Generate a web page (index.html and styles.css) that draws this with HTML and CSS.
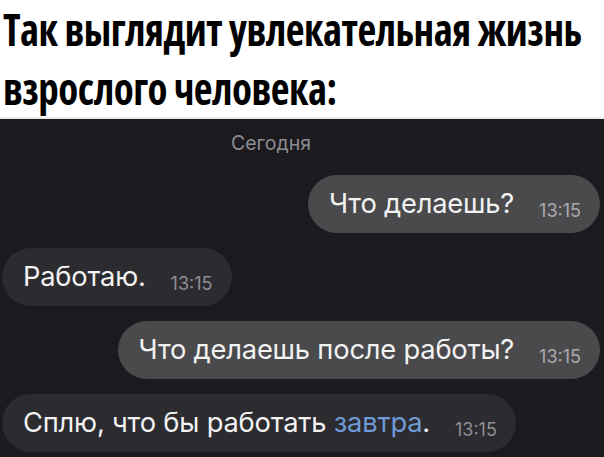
FILE: index.html
```html
<!DOCTYPE html>
<html lang="ru">
<head>
<meta charset="utf-8">
<link rel="stylesheet" href="styles.css">
</head>
<body>
<div class="page">
  <header class="caption">
    <h1 class="caption-title">Так выглядит увлекательная жизнь<br>взрослого человека:</h1>
  </header>
  <section class="chat">
    <div class="date">Сегодня</div>
    <div class="row row-out">
      <div class="bubble bubble-out"><span class="msg">Что делаешь?</span><span class="time">13:15</span></div>
    </div>
    <div class="row row-in">
      <div class="bubble bubble-in"><span class="msg">Работаю.</span><span class="time">13:15</span></div>
    </div>
    <div class="row row-out">
      <div class="bubble bubble-out"><span class="msg">Что делаешь после работы?</span><span class="time">13:15</span></div>
    </div>
    <div class="row row-in">
      <div class="bubble bubble-in"><span class="msg">Сплю, что бы работать <span class="link">завтра</span>.</span><span class="time">13:15</span></div>
    </div>
  </section>
</div>
</body>
</html>
```
FILE: styles.css
```css
html, body {
  margin: 0;
  padding: 0;
}
body {
  width: 604px;
  height: 457px;
  overflow: hidden;
  background: #1b1a1e;
}
.page {
  display: flex;
  flex-direction: column;
  width: 604px;
  height: 457px;
}
.caption {
  background: #ffffff;
  height: 117px;
  border-bottom: 2px solid #ececec;
  padding: 0 0 0 3px;
  box-sizing: content-box;
  white-space: nowrap;
}
.caption-title {
  margin: 0;
  padding-top: 0;
  font-family: "Open Sans", "DejaVu Sans Condensed", sans-serif;
  font-stretch: 75%;
  font-weight: 700;
  font-size: 41px;
  line-height: 54px;
  color: #000;
  letter-spacing: -0.5px;
  transform-origin: 0 0;
  transform: scaleY(1.08);
}
.chat {
  flex: 1;
  background: #1b1a1e;
  display: flex;
  flex-direction: column;
  gap: 15px;
  padding: 0 4px 0 2px;
}
.date {
  font-family: Inter, "Liberation Sans", sans-serif;
  font-size: 19.5px;
  color: #8d8c92;
  text-align: center;
  line-height: 24px;
  padding: 12px 60px 5px 0;
}
.row {
  display: flex;
}
.row-out {
  justify-content: flex-end;
}
.row-in {
  justify-content: flex-start;
}
.bubble {
  height: 58px;
  box-sizing: border-box;
  border-radius: 29px;
  padding: 0 19px 0 21px;
  font-family: Inter, "Liberation Sans", sans-serif;
  white-space: nowrap;
  line-height: 57px;
}
.bubble-out {
  background: #4a4a4d;
}
.bubble-in {
  background: #2c2b2f;
}
.msg {
  font-size: 27.3px;
  color: #f2f2f2;
  letter-spacing: -0.2px;
}
.link {
  color: #6f9ad6;
}
.time {
  display: inline-block;
  margin-left: 25px;
  font-size: 18px;
  vertical-align: -4px;
  line-height: 1;
}
.bubble-out .time {
  color: #a9a9ad;
}
.bubble-in .time {
  color: #8f8e94;
}
```
